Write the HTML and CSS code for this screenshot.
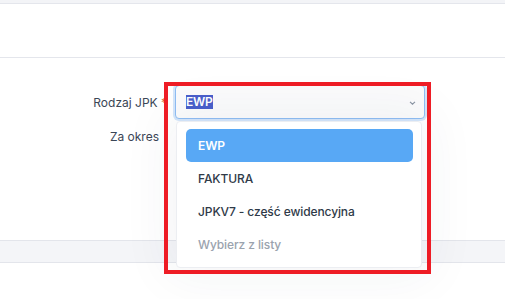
FILE: index.html
```html
<!DOCTYPE html>
<html lang="pl">
<head>
<meta charset="utf-8">
<link rel="stylesheet" href="styles.css">
</head>
<body>
  <div class="topbar"></div>
  <div class="header"></div>
  <div class="form">
    <div class="row">
      <label class="label">Rodzaj JPK<span class="req"> *</span></label>
      <div class="select">
        <span class="sel-text">EWP</span>
        <svg class="chev" width="7" height="4" viewBox="0 0 7 4"><path d="M1 .8l2.5 2.4L6 .8" fill="none" stroke="#8a94a2" stroke-width="1.1"/></svg>
      </div>
    </div>
    <div class="row">
      <label class="label">Za okres</label>
      <div></div>
    </div>
  </div>
  <div class="footer"></div>

  <div class="dropdown">
    <div class="opt active">EWP</div>
    <div class="opt">FAKTURA</div>
    <div class="opt">JPKV7 - część ewidencyjna</div>
    <div class="opt placeholder">Wybierz z listy</div>
  </div>
  <div class="annot"></div>
</body>
</html>
```

FILE: styles.css
```css
* { box-sizing: border-box; }
html, body { margin: 0; padding: 0; }
body {
  width: 505px;
  height: 299px;
  overflow: hidden;
  background: #fff;
  font-family: Inter, "Noto Sans", sans-serif;
  font-size: 12px;
  color: #3b4656;
  position: relative;
}
.topbar {
  height: 4px;
  background: #f3f4f7;
  border-bottom: 1px solid #e4e6ec;
}
.header {
  height: 54px;
  background: #fff;
  border-bottom: 1px solid #e4e6ec;
}
.form {
  height: 182px;
  padding-top: 27px;
}
.row {
  display: grid;
  grid-template-columns: 159px 250px;
  column-gap: 16px;
  height: 34px;
  align-items: center;
}
.label {
  text-align: right;
  color: #3b4656;
  white-space: nowrap;
}
.req { color: #e0633a; margin-right: -8px; }
.select {
  height: 34px;
  border: 1px solid #8fbdf3;
  border-radius: 4px;
  box-shadow: 0 0 0 2px #d4e6fb;
  background: #fbfbfc;
  display: flex;
  align-items: center;
  justify-content: space-between;
  padding: 0 8px 0 10px;
}
.sel-text {
  background: #4a5fcb;
  color: #fff;
  font-weight: 600;
  letter-spacing: -0.2px;
  line-height: 14px;
}
.chev { margin-top: 1px; }
.footer {
  height: 23px;
  background: #f4f5f8;
  border-top: 1px solid #e3e5eb;
  border-bottom: 1px solid #e3e5eb;
}
.dropdown {
  position: absolute;
  left: 176px;
  top: 121px;
  width: 246px;
  height: 147px;
  background: #fff;
  border: 1px solid #eceef2;
  border-radius: 4px;
  padding: 7px 8px 7px 9px;
  box-shadow: 0 0 50px 10px rgba(40, 50, 70, 0.05);
}
.opt {
  height: 33px;
  display: flex;
  align-items: center;
  padding-left: 12px;
  font-weight: 500;
  letter-spacing: -0.1px;
  color: #2f3a48;
  border-radius: 5px;
}
.opt.active {
  background: #58a8f5;
  color: #fff;
  font-weight: 600;
}
.opt.placeholder { color: #9aa3ae; }
.annot {
  position: absolute;
  left: 164px;
  top: 82px;
  width: 267px;
  height: 192px;
  border: 4px solid #ee1c25;
}
```
